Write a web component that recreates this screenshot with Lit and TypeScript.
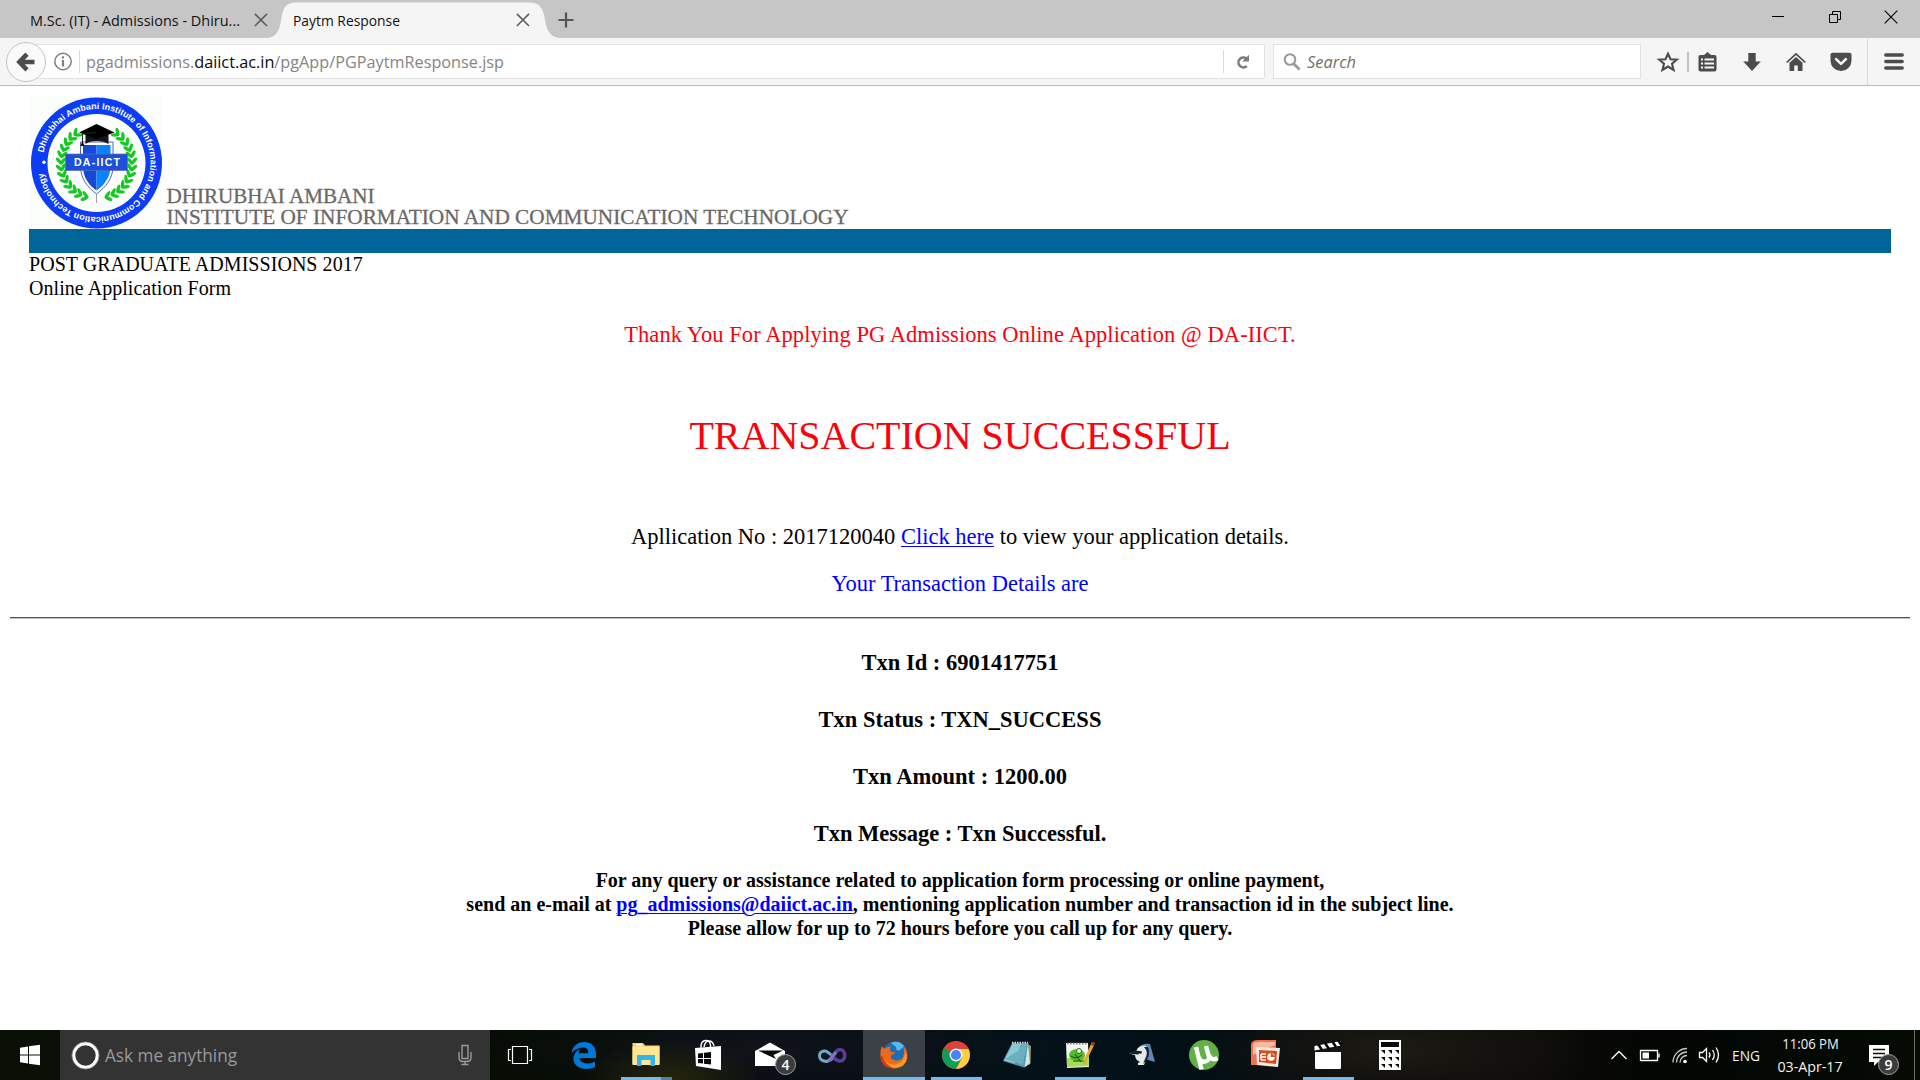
import { LitElement, html, svg, css } from "lit";
import { customElement } from "lit/decorators.js";

const UI = "'Open Sans','Noto Sans',sans-serif";

/** Single-line label squeezed to an exact advance width. */
const label = (text: unknown, width: number, size: number, fill: string, italic = false) => html`
  <svg class="label" width=${width} height="24" viewBox="0 0 ${width} 24">
    <text x="0" y="18" font-family=${UI} font-size=${size} fill=${fill}
      font-style=${italic ? "italic" : "normal"} textLength=${width} lengthAdjust="spacingAndGlyphs">${text}</text>
  </svg>`;

@customElement("browser-tabs")
class BrowserTabs extends LitElement {
  static styles = css`
    :host { display: flex; height: 38px; background: #c6c6c6; align-items: center; }
    svg { flex: none; display: block; overflow: visible; }
    .tab { display: flex; align-items: center; width: 240px; padding-left: 30px; height: 38px; gap: 14px; }
    .active { position: relative; box-sizing: border-box; width: 293px; padding: 0 33px 0 23px; gap: 0; justify-content: space-between; }
    .shape { position: absolute; left: 0; top: 0; }
    .active .label, .active .x { position: relative; }
    .label { margin-top: 1px; }
    .x { margin-top: 2px; }
    .plus { margin: 2px 0 0 -5px; }
    .window { display: flex; margin-left: auto; gap: 42px; padding-right: 22px; align-items: center; margin-top: -4px; }
  `;
  render() {
    const cross = () => html`<svg class="x" width="14" height="14" viewBox="0 0 14 14"><path d="M.9 .9 13 13M13 .9 .9 13" stroke="#5a5a5a" stroke-width="1.5" fill="none"/></svg>`;
    return html`
      <div class="tab">${label("M.Sc. (IT) - Admissions - Dhiru...", 210, 15, "#111")}${cross()}</div>
      <div class="tab active">
        <svg class="shape" width="293" height="38" viewBox="0 0 293 38"><path d="M-4 38C6 38 9 31 11 21 13 8 15 2.500 27 2.500H259C270 2.500 273 8 275 20 277 32 281 38 292 38Z" fill="#f5f5f5"/></svg>
        ${label("Paytm Response", 107, 15, "#111")}
        ${cross()}
      </div>
      <svg class="plus" width="16" height="16" viewBox="0 0 16 16"><path d="M8 .5V15.500M.5 8H15.500" stroke="#555" stroke-width="2.200"/></svg>
      <div class="window">
        <svg width="14" height="14" viewBox="0 0 14 14"><path d="M0 6.500H12" stroke="#000" stroke-width="1"/></svg>
        <svg width="14" height="14" viewBox="0 0 14 14"><path d="M1.500 4.500h8v8h-8zM4.500 4.500v-3h8v8h-3" stroke="#000" fill="none"/></svg>
        <svg width="14" height="14" viewBox="0 0 14 14"><path d="M.7 .7 13.300 13.300M13.300 .7 .7 13.300" stroke="#000" stroke-width="1.100"/></svg>
      </div>`;
  }
}

@customElement("browser-toolbar")
class BrowserToolbar extends LitElement {
  static styles = css`
    :host { display: flex; height: 48px; box-sizing: border-box; background: #f5f5f5; border-bottom: 1px solid #b9b9b9; align-items: center; }
    .label, svg { display: block; flex: none; overflow: visible; }
    .back { position: relative; z-index: 1; width: 38px; height: 38px; margin-left: 6px; border: 1px solid #c4c4c4; border-radius: 50%; background: #fafafa; display: grid; place-items: center; flex: none; }
    .box { box-sizing: border-box; height: 35px; background: #fff; border: 1px solid #e1e1e1; display: flex; align-items: center; }
    .url { width: 1239px; margin-left: -20px; border-radius: 0 2px 2px 0; }
    .info { margin-left: 26px; }
    .rule { width: 1px; height: 23px; background: #dadada; }
    .r1 { margin: 0 6px; }
    .r2 { margin-left: auto; margin-right: 12px; }
    .reload { margin-right: 14px; }
    .search { width: 368px; margin-left: 8px; }
    .mag { margin: 0 6px 0 9px; }
    .icons { display: flex; align-items: center; margin-left: 16px; }
    .star-rule { width: 2px; height: 20px; background: #c0c0c0; margin: 0 9px 0 8px; }
    .down { margin-left: 25px; } .home { margin-left: 24px; } .pocket { margin-left: 24px; }
    .menu-rule { width: 1px; height: 46px; background: #d9d9d9; margin: 0 16px 0 15px; }
  `;
  render() {
    const url = svg`<tspan fill="#858585">pgadmissions.</tspan><tspan fill="#0a0a0a">daiict.ac.in</tspan><tspan fill="#858585">/pgApp/PGPaytmResponse.jsp</tspan>`;
    return html`
      <div class="back"><svg width="20" height="20" viewBox="0 0 20 20"><path d="M11 2.200 3.400 10 11 17.800M3.600 10H18.500" fill="none" stroke="#4c4c4c" stroke-width="4.600"/></svg></div>
      <div class="box url">
        <svg class="info" width="20" height="20" viewBox="0 0 20 20"><circle cx="10" cy="9.500" r="8.200" fill="none" stroke="#808080" stroke-width="1.500"/><path d="M10 8V14.500M10 4.200V6.500" stroke="#808080" stroke-width="2.200"/></svg>
        <div class="rule r1"></div>
        ${label(url, 418, 16.5, "#858585")}
        <div class="rule r2"></div>
        <svg class="reload" width="14" height="16" viewBox="0 0 14 16"><path d="M10.500 4.700A4.900 4.900 0 1 0 10.700 12" fill="none" stroke="#7b7b7b" stroke-width="2.600"/><path d="M13 .8V7.500H6.200Z" fill="#7b7b7b"/></svg>
      </div>
      <div class="box search">
        <svg class="mag" width="18" height="18" viewBox="0 0 18 18"><circle cx="7" cy="6.500" r="5.300" fill="none" stroke="#999" stroke-width="2"/><path d="M10.500 10.500 16.500 16.500" stroke="#999" stroke-width="2.800"/></svg>
        ${label("Search", 49, 16.5, "#6f6f6f", true)}
      </div>
      <div class="icons">
        <svg width="22" height="22" viewBox="0 0 22 22"><path d="M11 2.700 13.500 8.200 19.800 8.700 15 12.700 16.600 19 11 15.600 5.400 19 7 12.700 2.200 8.700 8.500 8.200Z" fill="none" stroke="#4c4c4c" stroke-width="2.100"/></svg>
        <div class="star-rule"></div>
        <svg width="19" height="20" viewBox="0 0 19 20"><path d="M2.500 3H6L9.500 0 13 3H16.500Q18.500 3 18.500 5V17.500Q18.500 19.500 16.500 19.500H2.500Q.5 19.500 .5 17.500V5Q.5 3 2.500 3Z" fill="#4c4c4c"/><path d="M3 7.500H5M3 11.500H5M3 15.500H5M6.500 7.500H16M6.500 11.500H16M6.500 15.500H16" stroke="#f5f5f5" stroke-width="2"/></svg>
        <svg class="down" width="20" height="20" viewBox="0 0 20 20"><path d="M6.300 1H13.700V9.500H18.800L10 19 1.200 9.500H6.300Z" fill="#4c4c4c"/></svg>
        <svg class="home" width="20" height="20" viewBox="0 0 20 20"><path d="M.8 10.300 10 1.800 19.200 10.300" fill="none" stroke="#4c4c4c" stroke-width="1.700"/><path d="M3.500 10.800 10 5 16.500 10.800V19H11.800V13.500H8.200V19H3.500Z" fill="#4c4c4c"/></svg>
        <svg class="pocket" width="22" height="20" viewBox="0 0 22 20"><path d="M2.500 .8H19.500Q21.500 .8 21.500 2.800V8.500A10.500 10.500 0 0 1 .5 8.500V2.800Q.5 .8 2.500 .8Z" fill="#4c4c4c"/><path d="M6 7 11 11.800 16 7" fill="none" stroke="#f5f5f5" stroke-width="2.500" stroke-linecap="round" stroke-linejoin="round"/></svg>
        <div class="menu-rule"></div>
        <svg width="20" height="18" viewBox="0 0 20 18"><path d="M1.800 2H18.200M1.800 8.500H18.200M1.800 15H18.200" stroke="#4c4c4c" stroke-width="3.400" stroke-linecap="round"/></svg>
      </div>`;
  }
}

@customElement("institute-logo")
class InstituteLogo extends LitElement {
  static styles = css`:host { display: block; } svg { display: block; }`;
  /** Paired leaves along both branches of the wreath. */
  leaves() {
    const out = [];
    for (const side of [-1, 1]) {
      for (let i = 0; i < 13; i++) {
        const deg = 232 - i * 10.6;
        const a = (deg * Math.PI) / 180;
        const px = Math.cos(a) * 35.5 * -side;
        const py = Math.sin(a) * 35.5;
        const tangent = side === -1 ? deg + 90 : 90 - deg;
        for (const s of [-1, 1]) {
          out.push(svg`<ellipse cx="3.300" cy="0" rx="4.200" ry="1.700" fill="#14c922" transform="translate(${px} ${py}) rotate(${tangent + s * 38})"/>`);
        }
      }
    }
    return out;
  }
  render() {
    return html`<svg width="133" height="133" viewBox="-67.500 -67 133 133">
      <rect x="-67.500" y="-67" width="133" height="133" fill="#fafdfa"/>
      <circle r="65.500" fill="#0c3cf6"/><circle r="49" fill="#fff"/>
      <path id="ring" d="M-53 -10.300A54 54 0 1 1 -53.200 9.200" fill="none"/>
      <text font-family="'Liberation Sans',sans-serif" font-weight="700" font-size="8.800" fill="#fff" textLength="318" lengthAdjust="spacingAndGlyphs"><textPath href="#ring" textLength="318" lengthAdjust="spacingAndGlyphs">Dhirubhai Ambani Institute of Information and Communication Technology</textPath></text>
      <circle cx="-52.500" cy="-.8" r="1.700" fill="#fff"/>
      ${this.leaves()}
      <path d="M0 28V40" stroke="#9aa3a8" stroke-width="1"/>
      <path d="M-16 -21H16.500V3C16.500 16 9 24 0 31 -9 24 -16 16 -16 3Z" fill="#fff" stroke="#5566a8" stroke-width="1"/>
      <path d="M-13.500 -18H0V27.500C-8 22 -13.500 14 -13.500 3Z" fill="#1747d6"/><path d="M0 -18H14V3C14 14 8 22 0 27.500Z" fill="#0b83ff"/>
      <path d="M-11 -29V-19C-6 -23 6 -23 12 -19V-29Z" fill="#151515"/>
      <path d="M0 -39 18 -30.500 0 -24 -17.500 -30.500Z" fill="#000"/>
      <path d="M0 -31 -14 -29V-21" stroke="#222" fill="none"/><path d="M-14 -22 -16 -17H-12Z" fill="#000"/>
      <rect x="-31" y="-9" width="62" height="16.500" fill="#1c4fdc" stroke="#5a6db5" stroke-width=".7"/>
      <text x="-22.500" y="3.300" textLength="46" lengthAdjust="spacing" font-family="'Liberation Sans',sans-serif" font-weight="700" font-size="10.500" fill="#fff">DA-IICT</text>
    </svg>`;
  }
}

@customElement("payment-page")
class PaymentPage extends LitElement {
  static styles = css`
    :host { display: block; height: 944px; box-sizing: border-box; padding-top: 10px; background: #fff; color: #000; font-family: "Liberation Serif", "Times New Roman", serif; overflow: hidden; }
    .head { margin: 0 29px; }
    .brand { display: flex; align-items: flex-end; gap: 4px; height: 133px; }
    .brand svg { display: block; overflow: visible; }
    .bar { height: 24px; background: #006699; }
    .sub { font-size: 20px; line-height: 24px; margin-top: -1px; letter-spacing: 0.045px; }
    .center { text-align: center; font-size: 22.500px; line-height: 26px; }
    .red { color: #fd000c; }
    .thanks { margin-top: 22px; letter-spacing: 0.065px; }
    .title { font-size: 40px; line-height: 46px; margin-top: 65px; }
    .app { margin-top: 65px; }
    .blue { color: #00f; margin-top: 21px; }
    a { color: #00f; text-decoration: underline; text-decoration-thickness: 1px; text-underline-offset: 2px; }
    .hr { margin: 20px 10px 0; height: 1px; background: #555; border-bottom: 1px solid #c4c4c4; }
    .txn { font-weight: 700; margin-top: 31px; }
    .help { font-weight: 700; font-size: 20px; line-height: 24px; text-align: center; margin-top: 21px; }
  `;
  render() {
    const rows = ["Txn Id : 6901417751", "Txn Status : TXN_SUCCESS", "Txn Amount : 1200.00", "Txn Message : Txn Successful."];
    return html`
      <div class="head">
        <div class="brand">
          <institute-logo></institute-logo>
          <svg width="684" height="46" viewBox="0 0 684 46" font-family="'Liberation Serif',serif" font-size="22" fill="#6b6866" stroke="#6b6866" stroke-width=".3">
            <text x=".5" y="20" textLength="208" lengthAdjust="spacingAndGlyphs">DHIRUBHAI AMBANI</text>
            <text x=".5" y="41" textLength="682" lengthAdjust="spacingAndGlyphs">INSTITUTE OF INFORMATION AND COMMUNICATION TECHNOLOGY</text>
          </svg>
        </div>
        <div class="bar"></div>
        <div class="sub">POST GRADUATE ADMISSIONS 2017<br>Online Application Form</div>
      </div>
      <div class="center red thanks">Thank You For Applying PG Admissions Online Application @ DA-IICT.</div>
      <div class="center red title">TRANSACTION SUCCESSFUL</div>
      <div class="center app">Apllication No : 2017120040 <a>Click here</a> to view your application details.</div>
      <div class="center blue">Your Transaction Details are</div>
      <div class="hr"></div>
      ${rows.map((r) => html`<div class="center txn">${r}</div>`)}
      <div class="help">For any query or assistance related to application form processing or online payment,<br>
        send an e-mail at <a>pg_admissions@daiict.ac.in</a>, mentioning application number and transaction id in the subject line.<br>
        Please allow for up to 72 hours before you call up for any query.</div>`;
  }
}

const badge = (n: string, x: number, y: number) => svg`
  <circle cx=${x} cy=${y} r="10" fill="#3a3c3d" stroke="#a2a2a2"/>
  <text x=${x} y=${y + 5} text-anchor="middle" font-family=${UI} font-weight="600" font-size="14" fill="#fff">${n}</text>`;

const APPS: { state?: string; art: unknown }[] = [
  { art: svg`<path d="M-12.500 -2C-11.500 -9 -6.500 -13 .5 -13 8 -13 12 -7.500 12 -1V3H-4.500C-4 7 0 8.500 4 8.500 7 8.500 9 7.700 11 6.500V12C8.500 13.300 5.500 14 2.500 14 -5 14 -10.500 10 -10.500 3.500 -10.500 -1 -7.500 -4.500 -3.500 -6 -5 -4.500 -5.200 -3 -5.300 -1.800H4.300C4.300 -6 2.300 -7.600 -1 -7.600 -5.500 -7.600 -9.500 -5.500 -12.500 -2Z" fill="#0078d7"/>` },
  { state: "multi", art: svg`<path d="M-13.500 -12H-3L-1 -9.500H13.500V9H-13.500Z" fill="#f9d36b"/><path d="M-13.500 -8.500H13.500V10H-13.500Z" fill="#ffe694"/><path d="M-9.500 -11H-4V-9.500H-9.500Z" fill="#fff8dc"/><path d="M-9 0H9V11H4.500V5H-4.500V11H-9Z" fill="#35b4e8"/>` },
  { art: svg`<path d="M-7 -7V-10Q-6 -14.500 -2 -14.500 2 -14.500 2.500 -10V-8M-4 -8Q-3 -14 1 -14 5 -14 6 -9" fill="none" stroke="#fff" stroke-width="1.400"/><path d="M-13 -7 13 -9V15L-12 11Z" fill="#fff"/><path d="M-10 -1.500 -5 -2V3H-10ZM-4 -2.200 3 -3V3H-4ZM-10 4H-5V8.500L-10 8ZM-4 4H3V9.500L-4 8.700Z" fill="#05080b"/>` },
  { art: svg`<path d="M-15 -4 0 -12.500 15 -4V11H-15Z" fill="#fff"/><path d="M-12 -4.500H13L3.500 0 6 4Z" fill="#05080b"/>${badge("4", 15.5, 9.5)}` },
  { art: svg`<path d="M1 3C-2 6 -5 7 -8 6 -14 4 -14 -3 -8 -4 -4 -4.500 -1 0 2 3" fill="none" stroke="#6cabc9" stroke-width="3"/><path d="M-3 5C1 3 3 -5.500 8 -5.500 14 -5.500 14.500 6 8 6 5 6 3 4 1 2" fill="none" stroke="#5d3a9c" stroke-width="3.600"/><path d="M-4 5.500C-1 4.500 2 -.5 4 -3" fill="none" stroke="#7a74bd" stroke-width="3.200"/>` },
  { state: "active", art: svg`<circle cx="1" cy="-1.500" r="12" fill="#1b6fba"/><path d="M-3 -12Q5 -15.500 10 -9L6 -5Q2 -3 2 -8Z" fill="#5cb8e8"/><path d="M-12 -9 -9.500 -6Q-7 -9 -3 -8.500 -5 -6 -3 -3L1 -3Q0 0 -3 0 -4 4 0 5 7 7 9.500 1 11 -4 9 -9 14 -4 13.300 2 12 13 0 13.500 -12 13 -13.500 1Q-14 -5 -12 -9Z" fill="#ee6a1b"/><path d="M-11 3Q-7 10.500 2 9.500 10 8 11.500 -3 15 4 9 10 3 14.500 -6 11.500 -11 9 -11 3Z" fill="#f7a02b"/><path d="M-13.500 1Q-13 13 0 13.500 -9 10 -11.500 1Z" fill="#d8361c"/>` },
  { state: "run", art: svg`<circle r="14" fill="#db4437"/><path d="M0 0 -12.100 -7A14 14 0 0 0 0 14L6 3Z" fill="#0f9d58"/><path d="M0 14A14 14 0 0 0 12.600 -6H0L6 3Z" fill="#ffcd40"/><path d="M0 -6.500H12.500L10 -10H-8L-6 -2Z" fill="#db4437"/><circle r="6.500" fill="#f4f4f4"/><circle r="5" fill="#4285f4"/>` },
  { art: svg`<path d="M8 -12 13 -9 12.500 9 8 11Z" fill="#a68a58"/><path d="M-6 -12 11 -11.500 9 10 6 12.500 -15 6Z" fill="#4c98aa"/><path d="M-5.500 -11 4 -11 -3 8.500 -14 5.500Z" fill="#8fc8d2"/><path d="M-13 4 0 -4 3 -11 9 -11 5 10Z" fill="#6bb0bf"/><path d="M10 -11.500 12 8 6.500 12.500Z" fill="#c8e8ee"/><path d="M-6 -12.300H10" stroke="#ddd" stroke-width="2" stroke-dasharray="1.500 1"/>` },
  { state: "run", art: svg`<path d="M-14 -12H8L9 12 -13 13Z" fill="#f4f5ef"/><path d="M-13 -11.500H8" stroke="#777" stroke-width="2" stroke-dasharray="1.500 1.500"/><path d="M-13 3 9 2V11L-13 12Z" fill="#a6dc58"/><ellipse cx="-3" cy="0" rx="8" ry="6" fill="#52bd2c"/><circle cx="-1" cy="-4" r="2.500" fill="#e8ffe0" stroke="#246c17"/><path d="M-9 1Q-4 5 2 0M-5 -1 1 7M-7 6H5" stroke="#164813" fill="none"/><path d="M12 -13 15 -12 5 9 3 10 3 7Z" fill="#e9a72c"/><path d="M12 -13 15 -12 14 -9 11 -10Z" fill="#9b3527"/>` },
  { art: svg`<path d="M-5 -6Q0 -12.500 8 -11L13 7 3 4Z" fill="#5f86b4"/><path d="M-13 -1.500 -6 -4Q-3 -10 4 -9 7 -5 5 1L2 10H-4L-4 8 -2 7Q-7 5 -7 0Z" fill="#e4e9ec"/><path d="M-14 -1.500-6 -4.500 0 -3.500-4 -.5ZM2 -8Q7 -3 3 4L1 9Q10 1 6 -8Z" fill="#17222e"/><circle cx="-1.500" cy="-2.500" r="1.200" fill="#17222e"/>` },
  { art: svg`<circle r="15" fill="#61b146"/><path d="M-8 -8 -2.500 14.500M-5.500 2Q-3 8 1.500 6.500 6.500 5 4.500 0L2 -9M5 0Q7.500 6.500 13.500 3" fill="none" stroke="#fff" stroke-width="4.400"/>` },
  { art: svg`<path d="M-15 -11Q-14 -15 -8 -15H10V-7H-6V10H-15Z" fill="#ef7352"/><path d="M-13 -11Q-12 -13 -7 -13H9V-10L-13 0Z" fill="#ffb8a0"/><path d="M-10 -8 14 -7 12 12 -9 10Z" fill="#f7ece3"/><path d="M-7 -5 11 -4 10 9 -7 7Z" fill="#dd4b1c"/><path d="M-5 -1H0M-5 2H0M-5 5H0M-5 -1V5" stroke="#fff" stroke-width="1.500"/><circle cx="5" cy="2" r="3.800" fill="#fff"/><path d="M5 2V-2.500L9.500 2Z" fill="#dd4b1c"/>` },
  { state: "run", art: svg`<path d="M-13 -3H13V13Q13 14 12 14H-12Q-13 14 -13 13Z" fill="#fff"/><path d="M-13.500 -9 13 -14V-9.500L-13.500 -4.500Z" fill="#fff"/><path d="M-10 -11 -6 -5M-3 -12 1 -6M4 -14 8 -8M10 -15 14 -9" stroke="#05080b" stroke-width="2.500"/>` },
  { art: svg`<path d="M-11 -15H11V15H-11Z" fill="#fff"/><path d="M-9 -13H9V-8H-9Z" fill="#080806"/>${[-5, 2, 9].map((y) => [-9, -2, 5].map((x) => svg`<path d="M${x} ${y}h4v4l-2 -2z" fill="#080806"/>`))}` },
];

@customElement("desktop-taskbar")
class DesktopTaskbar extends LitElement {
  static styles = css`
    :host { display: flex; height: 50px; align-items: center; background:
      radial-gradient(ellipse 90px 40px at 670px 50px, #25250c 0, transparent 100%),
      radial-gradient(ellipse 300px 50px at 760px 20px, #10141a 0, transparent 100%),
      radial-gradient(ellipse 200px 60px at 1390px 20px, #1d1b15 0, transparent 100%),
      linear-gradient(90deg, #0b1006 0, #050b03 32%, #060a10 40%, #03121a 55%, #020f15 62%, #070706 72%, #0c0b08 80%, #030603 86%, #050a03 100%); }
    svg { display: block; flex: none; overflow: visible; }
    .ask { display: flex; align-items: center; width: 430px; height: 50px; background: #333; }
    .ask .label { margin-top: 1px; }
    .ring { margin: 0 5px 0 11px; }
    .mic { margin-left: auto; margin-right: 17px; }
    .app { width: 62px; height: 50px; display: flex; flex-direction: column; align-items: center; position: relative; }
    .active { background: #3b4147; }
    .line { position: absolute; bottom: 0; left: 6px; width: 51px; height: 3px; background: #76b9ed; }
    .active .line { left: 0; width: 62px; }
    .multi .line { border-right: 11px solid #527fa5; width: 40px; }
    .tray { display: flex; align-items: center; margin-left: auto; }
    .clock { display: flex; flex-direction: column; align-items: center; width: 68px; margin: 0 25px 0 16px; }
    .clock .label { height: 23px; }
    .peek { width: 1px; height: 50px; background: #6c6f6b; margin: 0 5px 0 15px; }
  `;
  render() {
    return html`
      <svg width="60" height="50" viewBox="0 0 60 50"><path d="M20 17.800 28 16.500V24.500H20ZM29 16.300 40 14.700V24.500H29ZM20 25.500H28V33.500L20 32.300ZM29 25.500H40V35.300L29 33.700Z" fill="#fff"/></svg>
      <div class="ask">
        <svg class="ring" width="29" height="29" viewBox="0 0 29 29"><circle cx="14.500" cy="14.500" r="11.800" fill="none" stroke="#fff" stroke-width="3.200"/><circle cx="14.500" cy="14.500" r="13.600" fill="none" stroke="#888" stroke-width=".8"/></svg>
        ${label("Ask me anything", 132, 17.5, "#9a9a9a")}
        <svg class="mic" width="16" height="22" viewBox="0 0 16 22"><path d="M5 1.500H11V14.500H5ZM2 8V13.500Q2 17.500 6 17.500H10Q14 17.500 14 13.500V8M8 17.500V20.500M4.500 20.500H11.500" fill="none" stroke="#9a9a9a" stroke-width="1.400"/></svg>
      </div>
      <svg width="63" height="50" viewBox="0 0 63 50"><path d="M22.500 16.500H37.500V33.500H22.500ZM21 19.500H18.500V30.500H21M39 19.500H41.500V30.500H39" fill="none" stroke="#fff" stroke-width="1.200"/></svg>
      ${APPS.map((a) => html`<div class="app ${a.state ?? ""}"><svg width="62" height="50" viewBox="-31 -25 62 50">${a.art}</svg>${a.state ? html`<div class="line"></div>` : ""}</div>`)}
      <div class="tray">
        <svg width="124" height="50" viewBox="0 0 124 50" fill="none" stroke="#fff" stroke-width="1.300">
          <path d="M3.500 29 11 21.500 18.500 29"/>
          <path d="M32.500 20.500H49.500V30.500H32.500ZM51 23.500V27.500"/><path d="M34.500 22.500H41V28.500H34.500Z" fill="#fff" stroke="none"/>
          <path d="M65 32.500A14 14 0 0 1 79 18.500M68.500 32.500A10.500 10.500 0 0 1 79 22M72 32.500A7 7 0 0 1 79 25.500" stroke="#c8c8c8"/><circle cx="77" cy="31.500" r="1.800" fill="#fff" stroke="none"/>
          <path d="M91.500 22.500H94.500L98.500 18.500V31.500L94.500 27.500H91.500Z"/><path d="M101 22.500Q103 25 101 27.500M104.500 20Q108 25 104.500 30M108 17.500Q113 25 108 32.500"/>
        </svg>
        ${label("ENG", 28, 14.5, "#f2f2f2")}
        <div class="clock">${label("11:06 PM", 59, 14.5, "#f2f2f2")}${label("03-Apr-17", 68, 14.5, "#f2f2f2")}</div>
        <svg width="30" height="50" viewBox="0 0 30 50"><path d="M0 15H20V32H9L5 36V32H0Z" fill="#fff"/><path d="M4 19.500H16M4 23.500H16M4 27.500H13" stroke="#080a06" stroke-width="1.300"/>${badge("9", 19.5, 34.5)}</svg>
        <div class="peek"></div>
      </div>`;
  }
}

@customElement("app-root")
class AppRoot extends LitElement {
  static styles = css`:host { display: flex; flex-direction: column; width: 1920px; height: 1080px; overflow: hidden; background: #fff; }`;
  render() {
    return html`<browser-tabs></browser-tabs><browser-toolbar></browser-toolbar><payment-page></payment-page><desktop-taskbar></desktop-taskbar>`;
  }
}
